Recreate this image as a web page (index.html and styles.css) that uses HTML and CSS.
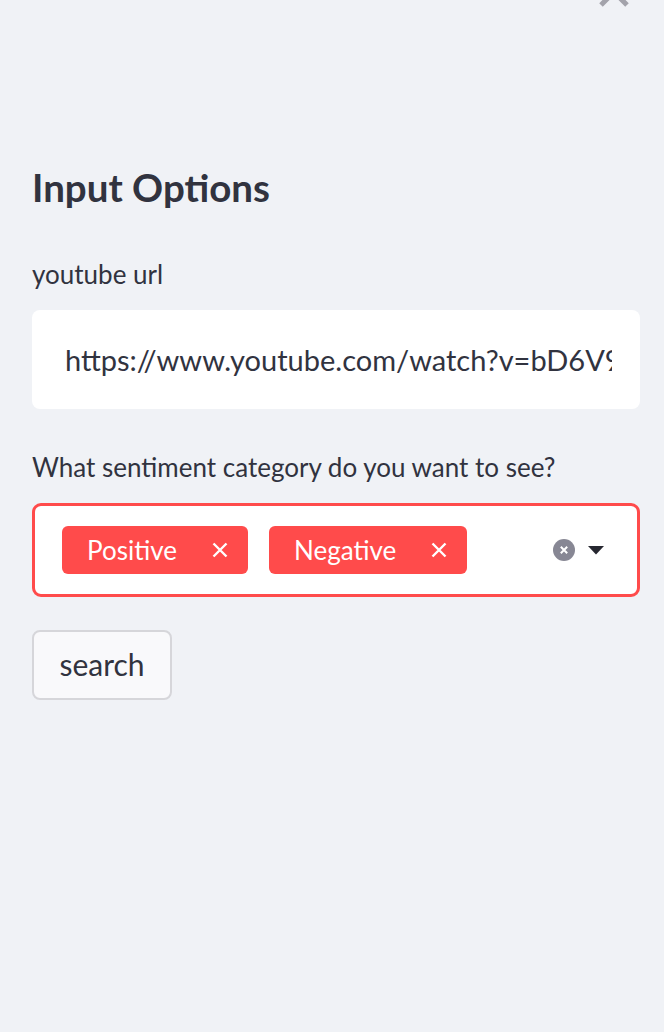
FILE: index.html
```html
<!DOCTYPE html>
<html lang="en">
<head>
<meta charset="utf-8">
<title>Input Options</title>
<link rel="stylesheet" href="styles.css">
</head>
<body>
<aside class="sidebar">
  <div class="sidebar-top">
    <svg class="close-icon" width="32" height="32" viewBox="0 0 32 32" aria-hidden="true">
      <path d="M3 3 L29 29 M29 3 L3 29" stroke="#a3a3ab" stroke-width="5" fill="none"/>
    </svg>
  </div>
  <h2 class="heading">Input Options</h2>

  <div class="field">
    <label class="label">youtube url</label>
    <div class="text-input"><span class="input-value">https://www.youtube.com/watch?v=bD6V9yJ9m0Q</span></div>
  </div>

  <div class="field field-select">
    <label class="label">What sentiment category do you want to see?</label>
    <div class="multiselect">
      <div class="tags">
        <span class="tag">Positive
          <svg class="tag-x" width="16" height="16" viewBox="0 0 16 16" aria-hidden="true"><path d="M1.5 1.5 L14.5 14.5 M14.5 1.5 L1.5 14.5" stroke="#fff" stroke-width="2.4" fill="none"/></svg>
        </span>
        <span class="tag">Negative
          <svg class="tag-x" width="16" height="16" viewBox="0 0 16 16" aria-hidden="true"><path d="M1.5 1.5 L14.5 14.5 M14.5 1.5 L1.5 14.5" stroke="#fff" stroke-width="2.4" fill="none"/></svg>
        </span>
      </div>
      <div class="controls">
        <svg class="clear-icon" width="22" height="22" viewBox="0 0 22 22" aria-hidden="true">
          <circle cx="11" cy="11" r="11" fill="#878794"/>
          <path d="M7.8 7.8 L14.2 14.2 M14.2 7.8 L7.8 14.2" stroke="#fff" stroke-width="2" fill="none"/>
        </svg>
        <svg class="caret" width="16" height="9" viewBox="0 0 16 9" aria-hidden="true">
          <path d="M0 0 H16 L8 8.5 Z" fill="#262730"/>
        </svg>
      </div>
    </div>
  </div>

  <button class="btn">search</button>
</aside>
</body>
</html>
```

FILE: styles.css
```css
* { box-sizing: border-box; }

html, body {
  margin: 0;
  padding: 0;
  background: #f0f2f6;
}

body {
  font-family: "Lato", "Open Sans", sans-serif;
  color: #31333f;
  width: 664px;
  height: 1032px;
  overflow: hidden;
}

.sidebar {
  padding: 0 24px 0 32px;
}

.sidebar-top {
  display: flex;
  justify-content: flex-end;
  height: 162px;
  padding-right: 10px;
}

.close-icon {
  margin-top: -24px;
}

.heading {
  margin: 0;
  font-size: 38.5px;
  font-weight: 700;
  line-height: 50px;
}

.field {
  margin-top: 46px;
}

.field-select {
  margin-top: 42px;
}

.label {
  display: block;
  font-size: 26px;
  line-height: 32px;
  margin-bottom: 20px;
}

.text-input {
  height: 99px;
  background: #ffffff;
  border-radius: 8px;
  padding: 0 28px 0 33px;
  display: flex;
  align-items: center;
  overflow: hidden;
}

.input-value {
  font-size: 29px;
  line-height: 36px;
  white-space: nowrap;
  overflow: hidden;
  display: block;
  width: 100%;
  padding-top: 1px;
}

.multiselect {
  height: 94px;
  background: #ffffff;
  border: 3px solid #ff4b4b;
  border-radius: 9px;
  padding: 0 33px 0 27px;
  display: flex;
  align-items: center;
  justify-content: space-between;
}

.tags {
  display: flex;
  gap: 21px;
}

.tag {
  display: flex;
  align-items: center;
  height: 48px;
  background: #ff4b4b;
  color: #ffffff;
  border-radius: 6px;
  font-size: 26px;
  padding: 0 20px 0 25px;
}

.tag-x {
  margin-left: 35px;
}

.controls {
  display: flex;
  align-items: center;
  gap: 13px;
}

.btn {
  display: block;
  margin-top: 33px;
  height: 70px;
  width: 140px;
  background: #f9f9fb;
  border: 2px solid #d6d6da;
  border-radius: 8px;
  font-family: inherit;
  font-size: 30px;
  color: #31333f;
  padding: 0 0 3px;
}
```
